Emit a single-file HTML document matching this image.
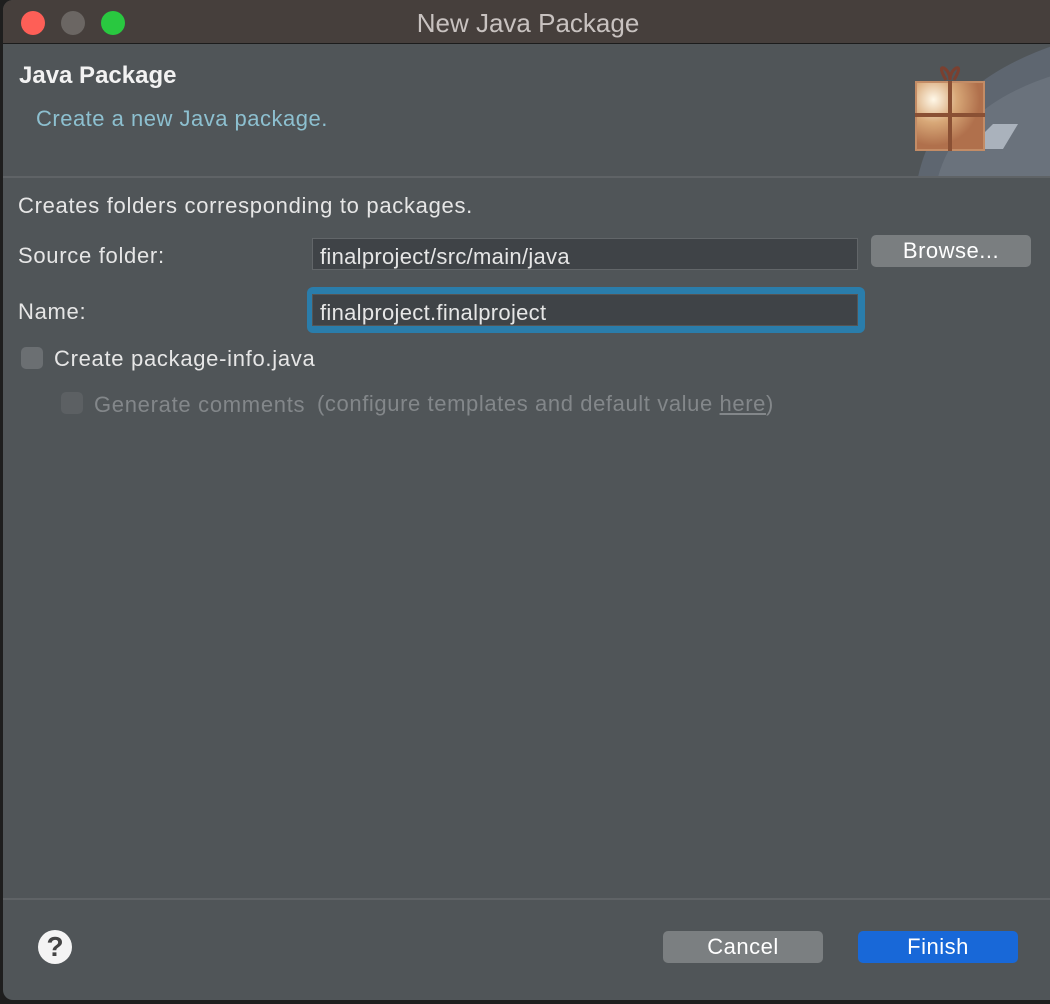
<!DOCTYPE html>
<html><head><style>
body{margin:0;width:1050px;height:1004px;background:#1e1e1e;font-family:"Liberation Sans",sans-serif;overflow:hidden;position:relative}
.win{position:absolute;left:3px;top:0;width:1060px;height:1000px;background:#505558;border-radius:10px;overflow:hidden}
.tb{position:absolute;left:0;top:0;right:0;height:43px;background:#463f3c;border-bottom:1px solid #1c1c1c}
.dot{position:absolute;top:11px;width:24px;height:24px;border-radius:50%}
.t{position:absolute;color:#e6e6e6;font-size:22px;letter-spacing:0.7px;white-space:nowrap}
.field{position:absolute;background:#3f4347;border:1px solid #626669;height:32px;box-sizing:border-box}
.btn{position:absolute;border-radius:5px;color:#fff;font-size:22px;letter-spacing:0.5px;text-align:center;box-sizing:border-box}
.cb{position:absolute;width:22px;height:22px;border-radius:5px;background:#6b6f72}
</style></head><body>
<div class="win">
<div class="tb">
<div class="dot" style="left:18px;background:#fe5f57"></div>
<div class="dot" style="left:58px;background:#6b6663"></div>
<div class="dot" style="left:98px;background:#29c840"></div>
<div class="t" style="left:0;top:8px;text-align:center;font-size:26px;letter-spacing:0;color:#c8c2c0;width:1050px">New Java Package</div>
</div>
<svg style="position:absolute;left:895px;top:44px" width="160" height="133">
<path d="M20 133 Q40 40 160 0 L160 133Z" fill="#5e6670"/>
<path d="M40 133 Q60 60 160 30 L160 133Z" fill="#6a727c"/>
<path d="M95 80 L120 80 L105 105 L70 105Z" fill="#aab2bc"/>
<rect x="17" y="37" width="70" height="70" fill="#c38c66"/>
<radialGradient id="g" cx="0.25" cy="0.25" r="0.7"><stop offset="0" stop-color="#fff8e8"/><stop offset="0.5" stop-color="#d8a878"/><stop offset="1" stop-color="#b0704c"/></radialGradient>
<rect x="19" y="39" width="66" height="66" fill="url(#g)"/>
<rect x="50" y="37" width="4" height="70" fill="#8a5034"/>
<rect x="17" y="69" width="70" height="4" fill="#8a5034"/>
<path d="M48 36 Q40 22 46 24 Q52 28 52 36 Q52 28 58 24 Q64 22 56 36" fill="none" stroke="#7a4030" stroke-width="3"/>
</svg>
<div class="t" style="left:16px;top:62px;font-size:24px;letter-spacing:0;font-weight:bold;color:#f2f2f2">Java Package</div>
<div class="t" style="left:33px;top:106px;color:#8dc0d0;letter-spacing:0.5px">Create a new Java package.</div>
<div style="position:absolute;left:0;right:0;top:176px;height:2px;background:#5f6366"></div>
<div class="t" style="left:15px;top:193px">Creates folders corresponding to packages.</div>
<div class="t" style="left:15px;top:243px">Source folder:</div>
<div class="field" style="left:309px;top:238px;width:546px"><span class="t" style="left:7px;top:5px;letter-spacing:0.3px">finalproject/src/main/java</span></div>
<div class="btn" style="left:868px;top:235px;width:160px;height:32px;background:#7a7e80;line-height:32px">Browse...</div>
<div class="t" style="left:15px;top:299px">Name:</div>
<div style="position:absolute;left:304px;top:287px;width:558px;height:46px;border-radius:6px;background:#2a7dab"></div>
<div class="field" style="left:309px;top:294px;width:546px;border-color:#555"><span class="t" style="left:7px;top:5px;letter-spacing:0.3px">finalproject.finalproject</span></div>
<div class="cb" style="left:18px;top:347px"></div>
<div class="t" style="left:51px;top:346px">Create package-info.java</div>
<div class="cb" style="left:58px;top:392px;background:#5c6063"></div>
<div class="t" style="left:91px;top:392px;color:#83878a">Generate comments</div>
<div class="t" style="left:314px;top:391px;color:#83878a;letter-spacing:0.6px">(configure templates and default value <u>here</u>)</div>
<div style="position:absolute;left:0;right:0;top:898px;height:2px;background:#5f6366"></div>
<div style="position:absolute;left:35px;top:930px;width:34px;height:34px;border-radius:50%;background:#f4f4f4;color:#444;font-weight:bold;font-size:28px;text-align:center;line-height:34px">?</div>
<div class="btn" style="left:660px;top:931px;width:160px;height:32px;background:#7b7f81;line-height:32px">Cancel</div>
<div class="btn" style="left:855px;top:931px;width:160px;height:32px;background:#1868d8;line-height:32px">Finish</div>
</div>
</body></html>
